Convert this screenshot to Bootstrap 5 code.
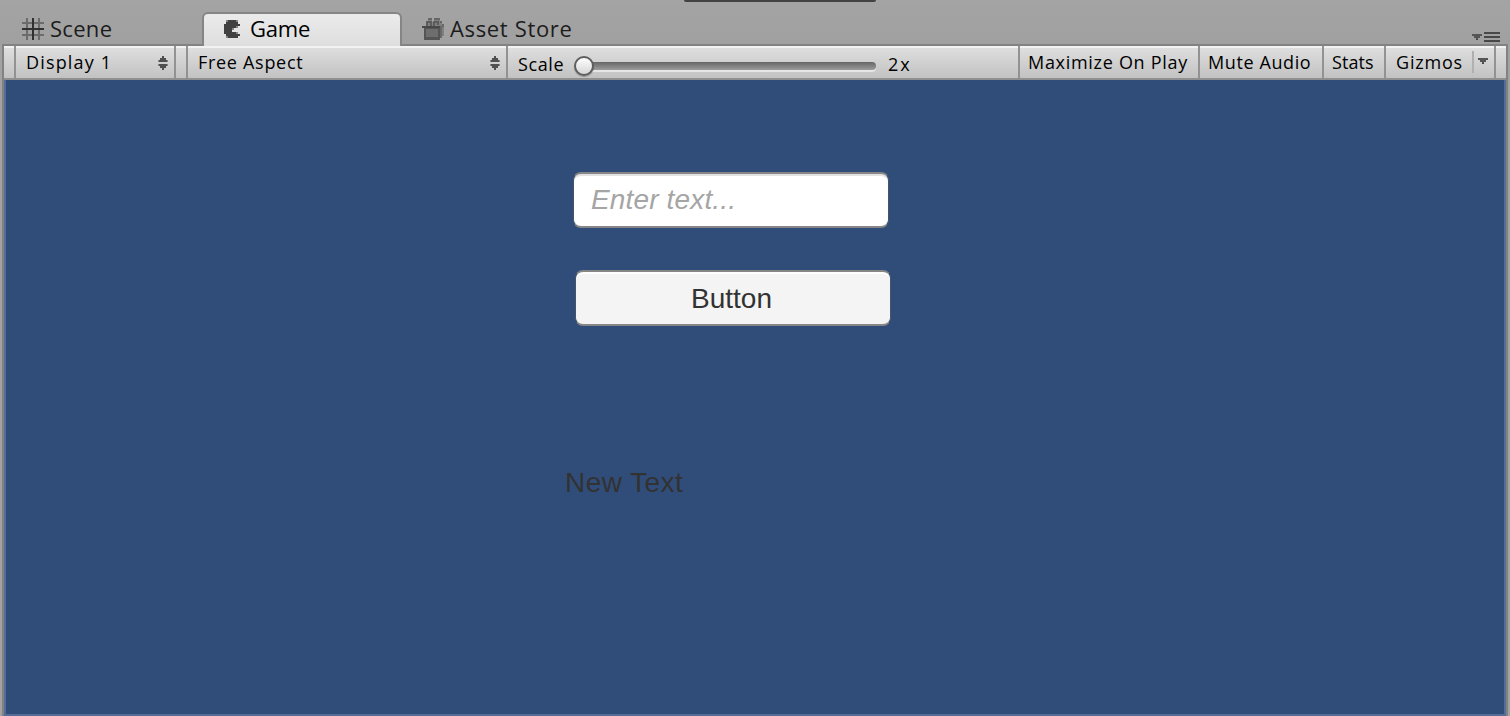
<!DOCTYPE html>
<html lang="en">
<head>
<meta charset="utf-8">
<meta name="viewport" content="width=device-width, initial-scale=1">
<title>Game</title>
<link href="https://cdn.jsdelivr.net/npm/bootstrap@5.3.0/dist/css/bootstrap.min.css" rel="stylesheet">
<style>
html,body{height:100%}
body{background:#a2a2a2;font-family:"Open Sans","Noto Sans",sans-serif;font-size:18px;line-height:22px;color:#000;overflow:hidden;white-space:nowrap}
.editor{height:716px;width:1510px}
.tabstrip{height:44px;background:linear-gradient(#a4a4a4,#a0a0a0);padding:0 10px 0 22px}
.notch{width:192px;height:2px;left:684px;top:0;background:#434343;border-radius:0 0 4px 4px}
.tab{font-size:22px;line-height:28px;color:#1c1c1c}
.tab svg{flex:none}
.tab-scene{width:180px;padding-top:14px}
.tab-game{width:200px;height:34px;margin-top:12px;padding:0 0 0 18px;border:2px solid #858585;border-bottom:0;border-radius:6px 6px 0 0;background:linear-gradient(#ebebeb,#dedede);color:#000}
.tab-store{padding:14px 0 0 20px}
.pane{margin:0 2px;border:2px solid #828282;border-bottom:0;height:672px}
.toolstrip{height:34px;background:linear-gradient(#f2f2f2 0,#f2f2f2 2px,#dedede 2px,#c2c2c2 32px);border-bottom:2px solid #8f8f8f}
.cell{border-right:2px solid #929292;height:32px;flex:none;padding-bottom:1px;letter-spacing:.6px}
.track{width:292px;height:8px;margin:4px 0 0 -10px;border-radius:0 4px 4px 0;background:linear-gradient(#666,#9c9c9c);box-shadow:0 2px 0 #e6e6e6}
.knob{width:20px;height:20px;margin-top:4px;border-radius:50%;border:2px solid #5d5d5d;background:linear-gradient(#fdfdfd,#d6d6d6);box-shadow:0 1px 1px #0004;z-index:1;flex:none}
.view{background:#304d7a;border:2px solid #536d96;border-top:0;height:636px;padding:92px 0 0 565px;font-family:"Liberation Sans",Arial,sans-serif;font-size:28px;line-height:32px;color:#323232}
.field,.push{width:316px;height:56px;border:1px solid #45546a;border-top:2px solid #868686;border-bottom:2px solid #868686;border-radius:8px;padding:0}
.field{background:#fff;box-shadow:inset 0 2px 0 #e2e2e2;padding-left:17px;margin-left:2px;font-style:italic;color:#a5a5a5;letter-spacing:.15px}
.push{background:#f4f4f4;box-shadow:inset 0 2px 0 #fff;margin:42px 0 0 4px;padding:2px 3px 0 0;font-size:28px;line-height:32px;color:#323232}
.label-text{margin:141px 0 0 -6px;letter-spacing:.45px}
</style>
</head>
<body>
<svg class="d-none">
  <symbol id="updown" viewBox="0 0 10 14"><path d="M4 0h2v2h2v2h1v2H1V4h1V2h2zM1 8h8v2H8v2H6v2H4v-2H2v-2H1z" fill="#505050"/><path d="M0 4h1v2H0zM9 4h1v2H9zM0 8h1v2H0zM9 8h1v2H9z" fill="#888"/></symbol>
  <symbol id="down" viewBox="0 0 10 7"><path d="M2 1h6v2H6v3H4V3H2z" fill="#444"/><path d="M0 0h10v2H8v2H6v1H4V4H2V2H0z" fill="#555"/></symbol>
</svg>
<div class="editor position-relative">
  <div class="notch position-absolute"></div>
  <nav class="tabstrip d-flex">
    <div class="tab tab-scene d-flex">
      <svg width="22" height="22" viewBox="0 0 22 22" style="margin-top:4px"><path d="M5 0v22M17 0v22M0 5h22M0 17h22" stroke="#6b6b6b" stroke-width="2"/><path d="M11 0v22M0 11h22" stroke="#303030" stroke-width="2"/></svg>
      <span style="margin-left:6px;letter-spacing:.3px">Scene</span>
    </div>
    <div class="tab tab-game d-flex">
      <svg width="20" height="20" viewBox="0 0 20 20" style="margin-top:6px"><path d="M6 0h8v2h2v2h2v2h-4v2h-4v4h4v2h4v2h-2v2H6v-2H4v-2H2V4h2V2h2z" fill="#414141"/><path d="M4 0h2v2H4zM14 0h2v2h-2zM14 6h2v2h-2zM10 8h2v2h-2zM14 12h2v2h-2zM4 16h2v2H4z" fill="#858585"/></svg>
      <span style="margin-left:8px;letter-spacing:-.2px">Game</span>
    </div>
    <div class="tab tab-store d-flex">
      <svg width="22" height="22" viewBox="0 0 22 22" style="margin-top:4px"><path d="M4 8V4h2V2h4v2h2V1h6v2h2v3h2v12h-2v2h-2V8z" fill="#808080"/><path d="M5 8V4h4v4M12 8V4h4v3" fill="none" stroke="#5c5c5c" stroke-width="2"/><path d="M6 1h4M12 1h6M18 4h2" stroke="#666" stroke-width="2"/><path d="M0 8h18v2H0z" fill="#484848"/><path d="M2 10h16v12H2z" fill="#555"/><path d="M4 11h12v8H4z" fill="#6e6e6e"/><path d="M19 8v12M21 6v3" stroke="#686868" stroke-width="2"/></svg>
      <span style="margin-left:6px;letter-spacing:.65px">Asset Store</span>
    </div>
    <svg class="ms-auto" width="28" height="12" viewBox="0 0 28 12" style="margin-top:31px"><use href="#down" y="3" width="10" height="7"/><path d="M12 2h16M12 6h16M12 10h16" stroke="#484848" stroke-width="2"/></svg>
  </nav>
  <main class="pane">
    <div class="toolstrip d-flex">
      <div class="cell" style="width:12px"></div>
      <div class="cell d-flex align-items-center justify-content-between" style="width:160px;padding-left:10px;padding-right:6px">
        <span style="letter-spacing:1.15px">Display 1</span>
        <svg width="10" height="14" style="margin-top:2px"><use href="#updown"/></svg>
      </div>
      <div class="cell" style="width:12px"></div>
      <div class="cell d-flex align-items-center justify-content-between" style="width:320px;padding-left:10px;padding-right:6px">
        <span style="letter-spacing:.7px">Free Aspect</span>
        <svg width="10" height="14" style="margin-top:2px"><use href="#updown"/></svg>
      </div>
      <div class="cell d-flex align-items-center" style="width:512px;padding:4px 0 0 10px">
        <span style="width:56px">Scale</span>
        <span class="knob"></span><span class="track"></span>
        <span style="margin-left:12px;letter-spacing:2px">2x</span>
      </div>
      <div class="cell d-flex align-items-center" style="width:180px;padding-left:8px;letter-spacing:.7px">Maximize On Play</div>
      <div class="cell d-flex align-items-center" style="width:124px;padding-left:8px">Mute Audio</div>
      <div class="cell d-flex align-items-center" style="width:62px;padding-left:8px;letter-spacing:.1px">Stats</div>
      <div class="cell d-flex align-items-center" style="width:110px;padding-left:10px"><span style="width:76px;letter-spacing:.8px">Gizmos</span>
        <svg width="18" height="26" viewBox="0 0 18 26"><path d="M1 2v22" stroke="#b0b0b0" stroke-width="2"/><use href="#down" x="6" y="9" width="10" height="7"/></svg>
      </div>
    </div>
    <section class="view">
      <div class="field d-flex align-items-center">Enter text...</div>
      <button class="push btn d-flex align-items-center justify-content-center">Button</button>
      <div class="label-text">New Text</div>
    </section>
  </main>
</div>
<script src="https://cdn.jsdelivr.net/npm/bootstrap@5.3.0/dist/js/bootstrap.bundle.min.js"></script>
</body>
</html>
